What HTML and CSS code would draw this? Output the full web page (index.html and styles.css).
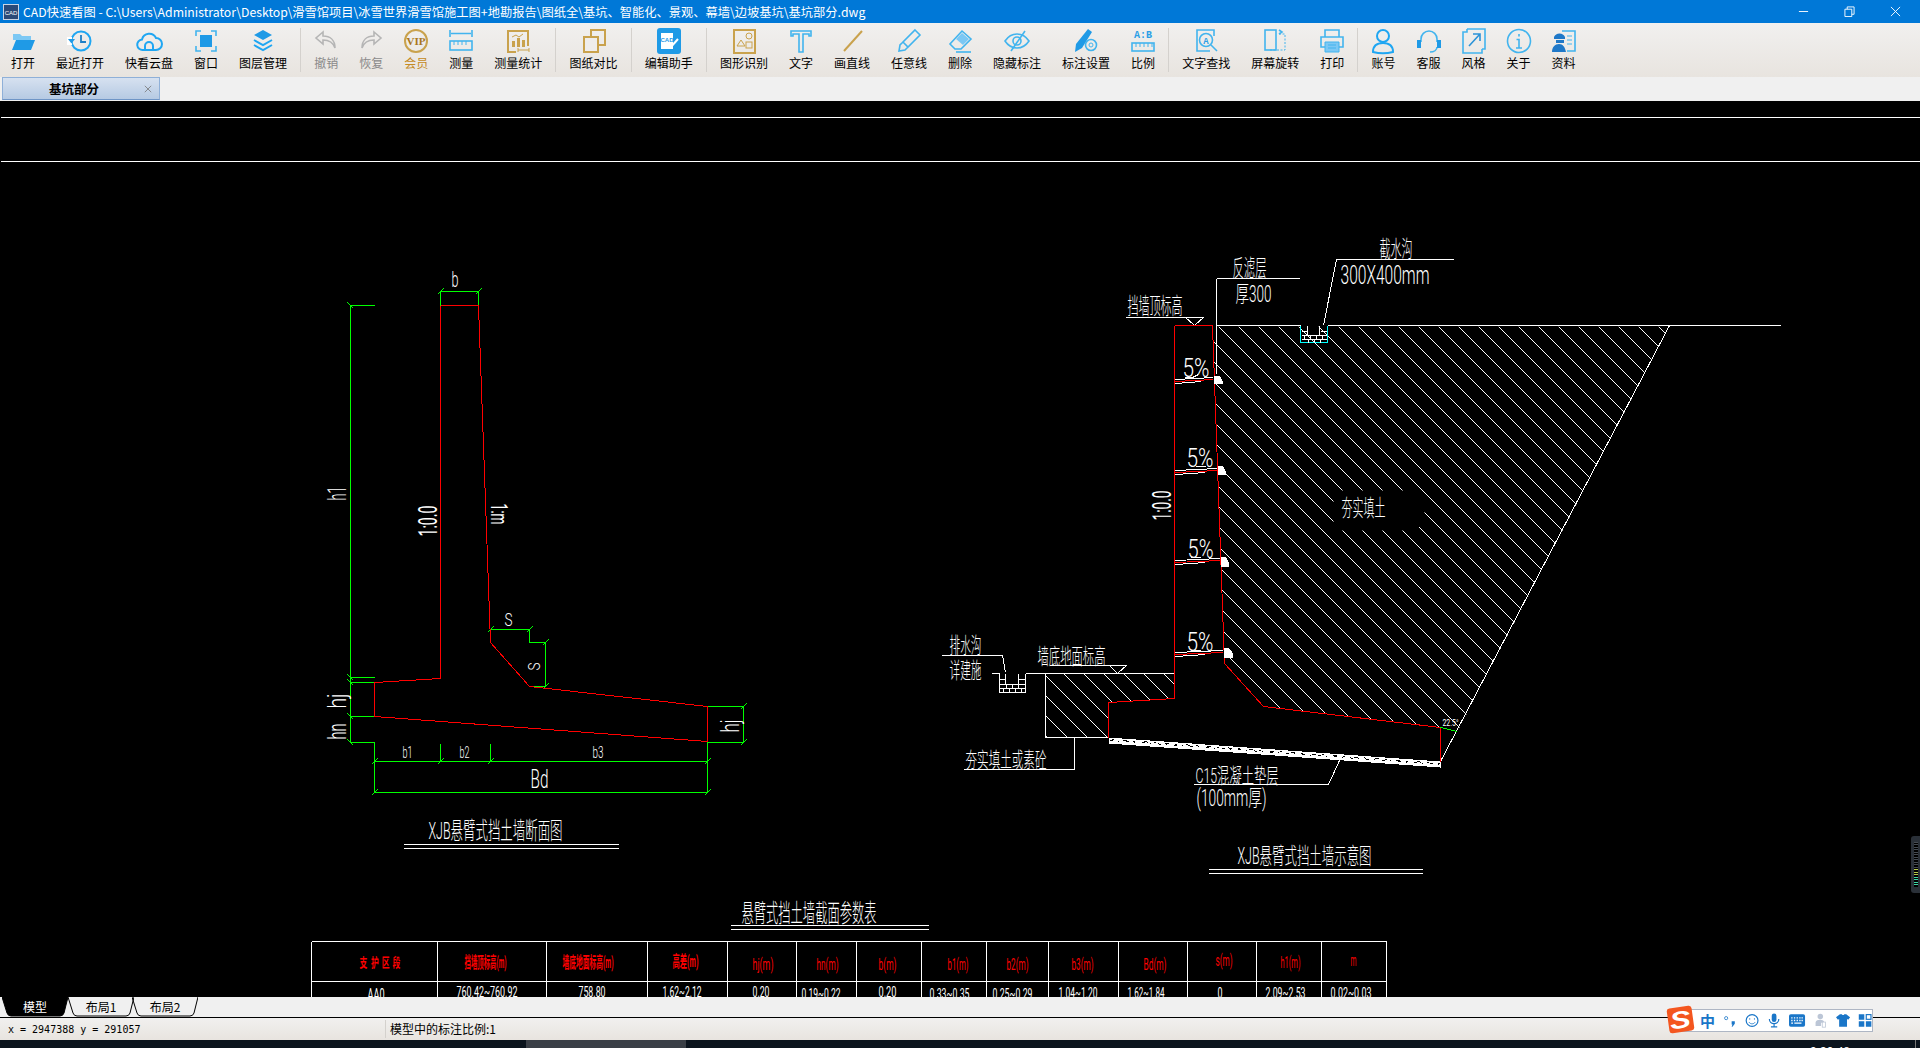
FILE: index.html
```html
<!DOCTYPE html>
<html lang="zh-CN">
<head>
<meta charset="utf-8">
<title>CAD快速看图</title>
<link rel="stylesheet" href="styles.css">
</head>
<body>
<header class="titlebar">
  <svg class="app-icon" viewBox="0 0 16 16"><rect x=".5" y=".5" width="15" height="15" fill="#2b4a78" stroke="#c9d4e4"/><text x="8" y="10.500" class="app-icon-text" text-anchor="middle" font-size="6">CAD</text></svg>
  <span class="title-text">CAD快速看图 - C:\Users\Administrator\Desktop\滑雪馆项目\冰雪世界滑雪馆施工图+地勘报告\图纸全\基坑、智能化、景观、幕墙\边坡基坑\基坑部分.dwg</span>
  <div class="win-controls">
    <span class="win-btn"><svg viewBox="0 0 12 12" class="win-ic"><path d="M1 6h10"/></svg></span>
    <span class="win-btn"><svg viewBox="0 0 12 12" class="win-ic"><path d="M1 3.5h7.500v8H1zM3.500 3.500V1h7.500v8H8.500"/></svg></span>
    <span class="win-btn"><svg viewBox="0 0 12 12" class="win-ic"><path d="M1 1l10 10M11 1L1 11"/></svg></span>
  </div>
</header>

<nav class="toolbar">
  <div class="tool"><svg class="ic" viewBox="0 0 26 26"><path class="f-lt" d="M3 6h7l2 2h9v4H3z"/><path class="f-bl" d="M2 22l4-10h19l-4 10z"/></svg><span>打开</span></div>
  <div class="tool"><svg class="ic" viewBox="0 0 26 26"><circle class="s-bl2" cx="14" cy="13" r="9.500"/><path class="f-wh" d="M0 9h5v8H0z"/><path class="f-bl" d="M1 11h7l-3.500 4.500z"/><path class="s-dk" d="M14 7v7h5"/></svg><span>最近打开</span></div>
  <div class="tool"><svg class="ic" viewBox="0 0 26 26"><path class="s-bl2" d="M7 22a5 5 0 0 1-1-10.500 7.500 7.500 0 0 1 14-1.500 6 6 0 0 1 0 12z"/><path class="s-bl2" d="M9 22v-4a4 4 0 0 1 8 0v4z"/></svg><span>快看云盘</span></div>
  <div class="tool"><svg class="ic" viewBox="0 0 26 26"><path class="s-bl" d="M3 8V3h5M18 3h5v5M23 18v5h-5M8 23H3v-5"/><rect class="f-bl" x="7" y="7" width="12" height="12"/></svg><span>窗口</span></div>
  <div class="tool"><svg class="ic" viewBox="0 0 26 26"><path class="f-bl" d="M13 2l9 5-9 5-9-5z"/><path class="s-bl2" d="M4 12l9 5 9-5M4 17l9 5 9-5"/></svg><span>图层管理</span></div>
  <i class="sep"></i>
  <div class="tool off"><svg class="ic" viewBox="0 0 26 26"><path class="s-gr" d="M10 4L3 10l7 6v-4c6 0 10 2 12 8 0-8-5-12-12-12z"/></svg><span>撤销</span></div>
  <div class="tool off"><svg class="ic" viewBox="0 0 26 26"><path class="s-gr" d="M16 4l7 6-7 6v-4c-6 0-10 2-12 8 0-8 5-12 12-12z"/></svg><span>恢复</span></div>
  <div class="tool vip"><svg class="ic" viewBox="0 0 26 26"><circle class="s-go" cx="13" cy="13" r="11"/><text class="vip-text" x="13" y="17" text-anchor="middle" font-size="11">VIP</text></svg><span>会员</span></div>
  <div class="tool"><svg class="ic" viewBox="0 0 26 26"><path class="s-bl" d="M2 2v7M24 2v7M3 5.500h20"/><rect class="s-bl" x="2" y="13" width="22" height="9"/><path class="s-bl1" d="M6 13v4M10 13v4M14 13v4M18 13v4"/></svg><span>测量</span></div>
  <div class="tool"><svg class="ic" viewBox="0 0 26 26"><path class="s-go" d="M23 18V3H3v21h8"/><path class="f-go" d="M7 13h3v6H7zM12 10h3v9h-3zM17 12h3v7h-3z"/><path class="s-go1" d="M7 9l4-2 3 2 4-3M13 22h11M13 20v4M24 20v4"/></svg><span>测量统计</span></div>
  <i class="sep"></i>
  <div class="tool"><svg class="ic" viewBox="0 0 26 26"><rect class="s-go" x="10" y="2" width="14" height="15"/><rect class="s-go bg-fill" x="3" y="9" width="14" height="15"/></svg><span>图纸对比</span></div>
  <i class="sep"></i>
  <div class="tool"><svg class="ic" viewBox="0 0 26 26"><rect class="f-bl" x="1" y="0" width="24" height="26" rx="3"/><path class="f-wh" d="M5 5h12v16H5z"/><text class="cad-mini" x="11" y="14" text-anchor="middle" font-size="6">CAD</text><path class="s-wh" d="M14 20l8-9"/></svg><span>编辑助手</span></div>
  <i class="sep"></i>
  <div class="tool"><svg class="ic" viewBox="0 0 26 26"><rect class="s-go" x="3" y="2" width="21" height="23"/><path class="s-go1" d="M6 18l4-6 4 6z"/><circle class="s-go1" cx="18" cy="8" r="3"/><rect class="s-go1" x="15" y="14" width="6" height="6"/></svg><span>图形识别</span></div>
  <div class="tool"><svg class="ic" viewBox="0 0 26 26"><path class="s-bl" d="M3 3h20v5h-2V6h-6v18h-4V6H5v2H3z"/></svg><span>文字</span></div>
  <div class="tool"><svg class="ic" viewBox="0 0 26 26"><path class="s-go" d="M5 23L23 3"/></svg><span>画直线</span></div>
  <div class="tool"><svg class="ic" viewBox="0 0 26 26"><path class="s-bl" d="M19 2l5 5-12 12-5-5zM7 14l-3 3-1 6 6-1 3-3"/></svg><span>任意线</span></div>
  <div class="tool"><svg class="ic" viewBox="0 0 26 26"><path class="s-bl" d="M15 3l9 8-10 10H8l-5-5z"/><path class="f-lt" d="M15 5l7 6-6 6-7-6z"/><path class="s-bl" d="M9 24h15"/></svg><span>删除</span></div>
  <div class="tool"><svg class="ic" viewBox="0 0 26 26"><path class="s-bl" d="M1 13c4-6 8-7 12-7s8 1 12 7c-4 6-8 7-12 7s-8-1-12-7z"/><circle class="s-bl" cx="13" cy="13" r="4"/><path class="s-bl" d="M21 3L7 23"/></svg><span>隐藏标注</span></div>
  <div class="tool"><svg class="ic" viewBox="0 0 26 26"><path class="f-bl" d="M15 1l4 3-10 16-7 4 1-8z"/><circle class="s-bl" cx="18" cy="17" r="5.500"/><circle class="s-bl1" cx="18" cy="17" r="2"/></svg><span>标注设置</span></div>
  <div class="tool"><svg class="ic" viewBox="0 0 26 26"><text class="ab-text" x="13" y="10" text-anchor="middle" font-size="10">A:B</text><rect class="s-bl" x="2" y="15" width="22" height="8"/><path class="s-bl1" d="M6 15v4M10 15v4M14 15v4M18 15v4M22 15v4"/></svg><span>比例</span></div>
  <i class="sep"></i>
  <div class="tool"><svg class="ic" viewBox="0 0 26 26"><path class="s-bl" d="M21 8V2H4v21h13"/><circle class="s-bl" cx="13" cy="12" r="6.500"/><text class="ab-text" x="13" y="15.500" text-anchor="middle" font-size="9">A</text><path class="s-bl" d="M18 17l6 6"/></svg><span>文字查找</span></div>
  <div class="tool"><svg class="ic" viewBox="0 0 26 26"><rect class="s-bl" x="3" y="2" width="11" height="20"/><path class="s-bl1 dash" d="M17 6h6v16H8"/><path class="s-bl" d="M17 2l3 2-3 2"/></svg><span>屏幕旋转</span></div>
  <div class="tool"><svg class="ic" viewBox="0 0 26 26"><path class="s-bl" d="M6 9V2h14v7M6 19H2V9h22v10h-4"/><rect class="f-lt" x="6" y="14" width="14" height="10"/><path class="s-bl1" d="M6 14h14v10H6zM9 17h8M9 20h8"/></svg><span>打印</span></div>
  <i class="sep"></i>
  <div class="tool"><svg class="ic" viewBox="0 0 26 26"><circle class="s-bl2" cx="13" cy="8" r="6"/><path class="s-bl2" d="M3 24c0-6 4-9 10-9s10 3 10 9c-6 1.500-14 1.500-20 0z"/></svg><span>账号</span></div>
  <div class="tool"><svg class="ic" viewBox="0 0 26 26"><path class="s-bl" d="M5 14v-3a8 8 0 0 1 16 0v3M21 19c0 3-3 5-7 5"/><path class="f-bl" d="M1 12h4v8H1zM21 12h4v8h-4z"/></svg><span>客服</span></div>
  <div class="tool"><svg class="ic" viewBox="0 0 26 26"><path class="s-bl" d="M6 1h18v20h-3M6 1v3H2v21h19v-4"/><path class="s-dk1" d="M8 18L19 6M12 6h7v7"/></svg><span>风格</span></div>
  <div class="tool"><svg class="ic" viewBox="0 0 26 26"><circle class="s-bl" cx="13" cy="13" r="11.500"/><path class="s-bl" d="M13 6v2.500M10.500 11.500H13V20M10 20h6"/></svg><span>关于</span></div>
  <div class="tool"><svg class="ic" viewBox="0 0 26 26"><path class="s-bl" d="M11 3h13v20H16"/><path class="s-bl1" d="M16 8h5M16 12h5M16 16h5"/><path class="f-dk" d="M3 9a6 6 0 0 1 11 0v2H3zM5 12h8v3H5zM1 24c0-5 3-8 7-8s6 3 7 8z"/></svg><span>资料</span></div>
</nav>

<div class="tabstrip">
  <div class="doc-tab"><span class="doc-name">基坑部分</span><svg class="doc-close" viewBox="0 0 10 10"><path d="M1 1l8 8M9 1L1 9"/></svg></div>
</div>

<main class="canvas">
<svg class="drawing" viewBox="-.5 100.5 1920 896" width="1920" height="896">
  <defs>
    <clipPath id="fill-a"><path clip-rule="evenodd" d="M1212 326H1669L1458 729 1440 727 1263 706 1224 663ZM1333 490H1416L1424 500V520L1416 530H1333Z"/></clipPath>
    <clipPath id="fill-b"><path d="M1045 673H1174V698L1108 702V737H1045Z"/></clipPath>
  </defs>

  <g class="wh">
    <path d="M0 117H1920M0 161H1920"/>
    <path d="M403 844H618M403 848H618M730 925H928M730 929H928M1208 869H1422M1208 873H1422"/>
  </g>

  <!-- left section -->
  <g class="gr">
    <path d="M440 291H478M440 291V305M478 291V305"/>
    <path d="M350 305H374M350 305V742M350 677H374M350 682H374M350 716H374M350 742H374"/>
    <path d="M374 742V792M707 741V792M374 761H707M374 792H707M440 743V761M490 743V761"/>
    <path d="M490 629H529V642H545V686H529M490 629V642"/>
    <path d="M707 706H743V742H707"/>
    <path d="M437 294l6-6M475 294l6-6M347 302l6 6M347 674l6 6M347 679l6 6M347 713l6 6M347 739l6 6M371 764l6-6M437 764l6-6M487 764l6-6M704 764l6-6M371 795l6-6M704 795l6-6M487 632l6-6M526 632l6-6M542 645l6-6M542 689l6-6M740 709l6-6M740 745l6-6"/>
  </g>
  <path class="rd" d="M440 305H478L490 642 529 686 707 706V741L374 716V682L440 678V305"/>

  <text class="cad" x="451" y="286" font-size="22" textLength="7" lengthAdjust="spacingAndGlyphs">b</text>
  <text class="cad" x="345" y="500" font-size="25" transform="rotate(-90 345 500)" textLength="14" lengthAdjust="spacingAndGlyphs">h1</text>
  <text class="cad-small" x="436" y="536" font-size="25" transform="rotate(-90 436 536)" textLength="31" lengthAdjust="spacingAndGlyphs">1:0.0</text>
  <text class="cad-small" x="490" y="503" font-size="23" transform="rotate(90 490 503)" textLength="21" lengthAdjust="spacingAndGlyphs">1:m</text>
  <text class="cad" x="504" y="625" font-size="18" textLength="8" lengthAdjust="spacingAndGlyphs">S</text>
  <text class="cad" x="539" y="670" font-size="17" transform="rotate(-90 539 670)" textLength="8" lengthAdjust="spacingAndGlyphs">S</text>
  <text class="cad" x="345" y="708" font-size="25" transform="rotate(-90 345 708)" textLength="15" lengthAdjust="spacingAndGlyphs">hj</text>
  <text class="cad" x="345" y="739" font-size="25" transform="rotate(-90 345 739)" textLength="16" lengthAdjust="spacingAndGlyphs">hn</text>
  <text class="cad" x="738" y="732" font-size="25" transform="rotate(-90 738 732)" textLength="13" lengthAdjust="spacingAndGlyphs">hj</text>
  <text class="cad" x="402" y="757" font-size="17" textLength="10" lengthAdjust="spacingAndGlyphs">b1</text>
  <text class="cad" x="459" y="757" font-size="17" textLength="10" lengthAdjust="spacingAndGlyphs">b2</text>
  <text class="cad" x="592" y="757" font-size="17" textLength="11" lengthAdjust="spacingAndGlyphs">b3</text>
  <text class="cad" x="530" y="787" font-size="25" textLength="18" lengthAdjust="spacingAndGlyphs">Bd</text>
  <text class="cad" x="428" y="838" font-size="24" textLength="134" lengthAdjust="spacingAndGlyphs">XJB悬臂式挡土墙断面图</text>

  <!-- right section -->
  <g class="hatch">
    <path clip-path="url(#fill-a)" d="M877 325l600 600M897 325l600 600M917 325l600 600M937 325l600 600M957 325l600 600M977 325l600 600M997 325l600 600M1017 325l600 600M1037 325l600 600M1057 325l600 600M1077 325l600 600M1097 325l600 600M1117 325l600 600M1137 325l600 600M1157 325l600 600M1177 325l600 600M1197 325l600 600M1217 325l600 600M1237 325l600 600M1257 325l600 600M1277 325l600 600M1297 325l600 600M1317 325l600 600M1337 325l600 600M1357 325l600 600M1377 325l600 600M1397 325l600 600M1417 325l600 600M1437 325l600 600M1457 325l600 600M1477 325l600 600M1497 325l600 600M1517 325l600 600M1537 325l600 600M1557 325l600 600M1577 325l600 600M1597 325l600 600M1617 325l600 600M1637 325l600 600M1657 325l600 600"/>
    <path clip-path="url(#fill-b)" d="M983 673l100 100M1003 673l100 100M1023 673l100 100M1043 673l100 100M1063 673l100 100M1083 673l100 100M1103 673l100 100M1123 673l100 100M1143 673l100 100M1163 673l100 100"/>
  </g>
  <g class="wh">
    <path d="M1216 325H1300M1327 325H1780M1669 325L1440 761"/>
    <path d="M991 673H999M1025 673H1174M1045 673V737H1108"/>
    <path d="M1216 278V373M1216 278H1299M1336 259H1453M1336 259L1323 325"/>
    <path d="M1125 317H1203M1185 317L1194 325 1203 317"/>
    <path d="M941 655H1002L1005 672M1049 665H1126M1109 665L1117 673 1126 665"/>
    <path d="M1074 737V769H963M1339 760L1328 784H1193"/>
  </g>
  <path class="rd" d="M1174 325H1212L1224 663 1263 706 1440 727V761M1174 325V698L1108 702V737"/>

  <!-- drain pipes -->
  <g class="wh">
    <path d="M1175 379l38-2M1175 383l26-2M1175 470l42-2M1175 474l30-2M1175 560l45-2M1175 564l30-2M1175 652l48-2M1175 656l30-2"/>
    <path d="M1184 377h8l6-3M1195 466h10M1190 557h10M1190 650h10"/>
  </g>
  <path class="rd" d="M1175 381l38-2M1175 472l42-2M1175 562l45-2M1175 654l48-2"/>
  <g class="blob">
    <path d="M1213 375h6l3 5v3h-9zM1217 465h5l3 5v4h-8zM1220 556h5l3 5v5h-8zM1223 647h5l4 5v5h-9z"/>
  </g>

  <!-- top trench -->
  <path class="cy" d="M1300 325V342H1327V325"/>
  <path class="wh" d="M1301 331H1306M1301 335H1326M1301 339H1326M1320 331H1326M1307 325V335M1319 325V335M1304 335V339M1310 335V339M1316 335V339M1322 335V339M1308 339V342M1314 339V342M1320 339V342"/>
  <!-- left trench -->
  <path class="wh" d="M999 673V692H1025V673M1005 673V684H1018V673M999 679H1005M999 684H1005M1018 679H1025M1018 684H1025M999 688H1025M1006 684V688M1012 684V688M1018 684V688M1003 688V692M1009 688V692M1015 688V692M1021 688V692"/>

  <!-- C15 band -->
  <path class="blob" d="M1108 737L1440 761V767L1108 743Z"/>
  <path class="bandtex" d="M1110 740l330 24"/>
  <path class="bandtex2" d="M1112 739l328 24"/>
  <path class="gr" d="M1440 727l17 4"/>

  <text class="cad" x="1127" y="313" font-size="23" textLength="55" lengthAdjust="spacingAndGlyphs">挡墙顶标高</text>
  <text class="cad" x="1232" y="275" font-size="23" textLength="34" lengthAdjust="spacingAndGlyphs">反滤层</text>
  <text class="cad" x="1235" y="301" font-size="23" textLength="36" lengthAdjust="spacingAndGlyphs">厚300</text>
  <text class="cad" x="1379" y="256" font-size="23" textLength="33" lengthAdjust="spacingAndGlyphs">截水沟</text>
  <text class="cad" x="1340" y="283" font-size="25" textLength="89" lengthAdjust="spacingAndGlyphs">300X400mm</text>
  <text class="cad" x="1182" y="376" font-size="25" textLength="27" lengthAdjust="spacingAndGlyphs">5%</text>
  <text class="cad" x="1186" y="466" font-size="25" textLength="27" lengthAdjust="spacingAndGlyphs">5%</text>
  <text class="cad" x="1187" y="557" font-size="25" textLength="26" lengthAdjust="spacingAndGlyphs">5%</text>
  <text class="cad" x="1186" y="650" font-size="25" textLength="27" lengthAdjust="spacingAndGlyphs">5%</text>
  <text class="cad-small" x="1170" y="520" font-size="25" transform="rotate(-90 1170 520)" textLength="30" lengthAdjust="spacingAndGlyphs">1:0.0</text>
  <text class="cad" x="1341" y="515" font-size="23" textLength="44" lengthAdjust="spacingAndGlyphs">夯实填土</text>
  <text class="cad" x="949" y="652" font-size="22" textLength="32" lengthAdjust="spacingAndGlyphs">排水沟</text>
  <text class="cad" x="949" y="677" font-size="22" textLength="32" lengthAdjust="spacingAndGlyphs">详建施</text>
  <text class="cad" x="1037" y="663" font-size="22" textLength="68" lengthAdjust="spacingAndGlyphs">墙底地面标高</text>
  <text class="cad" x="965" y="766" font-size="21" textLength="81" lengthAdjust="spacingAndGlyphs">夯实填土或素砼</text>
  <text class="cad" x="1195" y="782" font-size="21" textLength="83" lengthAdjust="spacingAndGlyphs">C15混凝土垫层</text>
  <text class="cad" x="1196" y="805" font-size="23" textLength="70" lengthAdjust="spacingAndGlyphs">(100mm厚)</text>
  <text class="cad-small" x="1442" y="725" font-size="9" textLength="16" lengthAdjust="spacingAndGlyphs">22.5°</text>
  <text class="cad" x="1237" y="863" font-size="23" textLength="134" lengthAdjust="spacingAndGlyphs">XJB悬臂式挡土墙示意图</text>

  <!-- table -->
  <text class="cad" x="741" y="921" font-size="25" textLength="135" lengthAdjust="spacingAndGlyphs">悬臂式挡土墙截面参数表</text>
  <path class="wh" d="M311 941H1386M311 981H1386M311 941V997M437 941V997M546 941V997M647 941V997M727 941V997M796 941V997M856 941V997M921 941V997M986 941V997M1048 941V997M1118 941V997M1187 941V997M1256 941V997M1321 941V997M1386 941V997"/>
  <g class="cad-red">
    <text class="cjk-dense" transform="translate(359 966) scale(.6 1)" x="0 19 37 55" font-size="13">支护区段</text>
    <text class="cjk-dense" x="464" y="967" font-size="16" textLength="42" lengthAdjust="spacingAndGlyphs">挡墙顶标高(m)</text>
    <text class="cjk-dense" x="562" y="967" font-size="16" textLength="51" lengthAdjust="spacingAndGlyphs">墙底地面标高(m)</text>
    <text class="cjk-dense" x="672" y="966" font-size="16" textLength="26" lengthAdjust="spacingAndGlyphs">高差(m)</text>
    <text x="752" y="969" font-size="16" textLength="21" lengthAdjust="spacingAndGlyphs">hj(m)</text>
    <text x="816" y="969" font-size="16" textLength="22" lengthAdjust="spacingAndGlyphs">hn(m)</text>
    <text x="878" y="969" font-size="16" textLength="18" lengthAdjust="spacingAndGlyphs">b(m)</text>
    <text x="947" y="969" font-size="16" textLength="21" lengthAdjust="spacingAndGlyphs">b1(m)</text>
    <text x="1006" y="969" font-size="16" textLength="22" lengthAdjust="spacingAndGlyphs">b2(m)</text>
    <text x="1071" y="969" font-size="16" textLength="22" lengthAdjust="spacingAndGlyphs">b3(m)</text>
    <text x="1143" y="969" font-size="16" textLength="23" lengthAdjust="spacingAndGlyphs">Bd(m)</text>
    <text x="1215" y="965" font-size="16" textLength="17" lengthAdjust="spacingAndGlyphs">s(m)</text>
    <text x="1280" y="967" font-size="16" textLength="20" lengthAdjust="spacingAndGlyphs">h1(m)</text>
    <text x="1350" y="965" font-size="16" textLength="6" lengthAdjust="spacingAndGlyphs">m</text>
  </g>
  <g class="cad-small">
    <text x="367" y="999" font-size="16" textLength="17" lengthAdjust="spacingAndGlyphs">AA0</text>
    <text x="456" y="996" font-size="15" textLength="61" lengthAdjust="spacingAndGlyphs">760.42~760.92</text>
    <text x="578" y="996" font-size="15" textLength="27" lengthAdjust="spacingAndGlyphs">758.80</text>
    <text x="662" y="996" font-size="15" textLength="39" lengthAdjust="spacingAndGlyphs">1.62~2.12</text>
    <text x="752" y="996" font-size="15" textLength="17" lengthAdjust="spacingAndGlyphs">0.20</text>
    <text x="801" y="998" font-size="15" textLength="39" lengthAdjust="spacingAndGlyphs">0.19~0.22</text>
    <text x="878" y="996" font-size="15" textLength="18" lengthAdjust="spacingAndGlyphs">0.20</text>
    <text x="929" y="998" font-size="15" textLength="40" lengthAdjust="spacingAndGlyphs">0.33~0.35</text>
    <text x="992" y="998" font-size="15" textLength="40" lengthAdjust="spacingAndGlyphs">0.25~0.29</text>
    <text x="1058" y="997" font-size="15" textLength="39" lengthAdjust="spacingAndGlyphs">1.04~1.20</text>
    <text x="1127" y="997" font-size="15" textLength="37" lengthAdjust="spacingAndGlyphs">1.62~1.84</text>
    <text x="1217" y="997" font-size="15" textLength="5" lengthAdjust="spacingAndGlyphs">0</text>
    <text x="1265" y="997" font-size="15" textLength="40" lengthAdjust="spacingAndGlyphs">2.09~2.53</text>
    <text x="1330" y="997" font-size="15" textLength="41" lengthAdjust="spacingAndGlyphs">0.02~0.03</text>
  </g>
</svg>
</main>

<div class="sheets">
  <div class="sheet active"><svg class="sheet-shape" viewBox="0 0 66 20"><path d="M0 0L5 16Q6 19 9 19H58Q61 19 62 16L66 0Z"/></svg><span>模型</span></div>
  <div class="sheet"><svg class="sheet-shape" viewBox="0 0 66 20"><path d="M0 0L5 16Q6 19 9 19H58Q61 19 62 16L66 0"/></svg><span>布局1</span></div>
  <div class="sheet overlap"><svg class="sheet-shape" viewBox="0 0 66 20"><path d="M0 0L5 16Q6 19 9 19H58Q61 19 62 16L66 0"/></svg><span>布局2</span></div>
</div>
<div class="status">
  <span class="coords">x = 2947388 y = 291057</span>
  <span class="scale">模型中的标注比例:1</span>
</div>
<footer class="taskbar">
  <i class="task-active"></i>
  <span class="clock">9:30:48</span>
  <i class="task-edge"></i>
</footer>

<div class="volume"><i class="vol-bars"></i></div>

<div class="ime">
  <span class="ime-logo"><b>S</b></span>
  <span class="ime-zh">中</span>
  <svg class="ime-ic" viewBox="0 0 18 18"><circle class="ime-s1" cx="4" cy="6" r="2"/><path class="ime-f" d="M11 10h4v3l-3 4h-1l1-3h-1z"/></svg>
  <svg class="ime-ic" viewBox="0 0 18 18"><circle class="ime-s" cx="9" cy="9" r="7.500"/><path class="ime-s1" d="M6 6v2M12 6v2M5 11c2 3 6 3 8 0"/></svg>
  <svg class="ime-ic" viewBox="0 0 18 18"><rect class="ime-f" x="6" y="0" width="6" height="11" rx="3"/><path class="ime-s" d="M3 7c0 8 12 8 12 0M9 13v4M5 17h8"/></svg>
  <svg class="ime-ic wide" viewBox="0 0 18 14"><rect class="ime-f" x="0" y="0" width="18" height="14" rx="2"/><path class="ime-key" d="M2.500 4h1.500M5.500 4H7M8.500 4H10M11.500 4H13M14 4h1.500M2.500 7h1.500M5.500 7H7M8.500 7H10M11.500 7H13M14 7h1.500M2.500 10h2M6 10h8"/></svg>
  <svg class="ime-ic" viewBox="0 0 18 18"><circle class="ime-pale" cx="8" cy="4" r="3.500"/><path class="ime-pale" d="M2 16v-4c0-3 3-4 6-4s5 1 5 4H9v4z"/><rect class="ime-pale-s" x="10.500" y="11" width="4" height="6.500"/></svg>
  <svg class="ime-ic" viewBox="0 0 18 18"><path class="ime-f" d="M5 1h2.500c.5 1.500 2.500 1.500 3 0H13l5 4-2.500 3-1.500-1v10H4V7L2.500 8 0 5z"/></svg>
  <svg class="ime-ic" viewBox="0 0 18 18"><path class="ime-f" d="M1 1h7v7H1zM1 10h7v7H1zM10 10h7v7h-7z"/><rect class="ime-s" x="10.500" y="1.500" width="6" height="6"/></svg>
</div>
</body>
</html>
```
FILE: styles.css
```css
* { box-sizing: border-box; }
html, body { margin: 0; padding: 0; }
body {
  width: 1920px; height: 1048px; overflow: hidden; position: relative;
  display: flex; flex-direction: column; background: #000;
  font-family: "Noto Sans CJK SC", "Liberation Sans", sans-serif; font-size: 12px; color: #000;
}

/* title bar */
.titlebar { flex: 0 0 23px; background: #0078d7; color: #fff; display: flex; align-items: center; padding-left: 3px; }
.app-icon { width: 16px; height: 16px; margin-right: 4px; }
.app-icon-text { fill: #fff; font-family: "Liberation Sans", sans-serif; }
.title-text { font-size: 12.25px; line-height: 16px; white-space: nowrap; }
.win-controls { margin-left: auto; display: flex; padding-right: 2px; }
.win-btn { width: 46px; height: 23px; display: flex; align-items: center; justify-content: center; }
.win-ic { width: 11px; height: 11px; fill: none; stroke: #fff; stroke-width: 1; }

/* toolbar */
.toolbar { flex: 0 0 54px; display: flex; align-items: flex-start; background: linear-gradient(#f1f0ef, #e8e4df); padding-left: .5px; }
.tool { display: flex; flex-direction: column; align-items: center; padding: 5px 10.5px 0; }
.tool span { line-height: 16px; margin-top: 1px; white-space: nowrap; }
.tool.off span { color: #8a8a8a; }
.tool.vip span { color: #c48a22; }
.ic { width: 26px; height: 26px; display: block; overflow: visible; margin: 0 -1px; }
.sep { flex: 0 0 1px; width: 1px; height: 44px; margin: 5px 2.6px 0; background: #d4d1cd; }

.f-bl { fill: #1f9ae6; }
.f-lt { fill: #7cc8f4; }
.f-wh { fill: #fff; }
.f-go { fill: #c9a24d; }
.f-dk { fill: #1f78c8; }
.s-bl, .s-bl1, .s-bl2, .s-dk, .s-dk1, .s-gr, .s-go, .s-go1, .s-wh { fill: none; }
.s-bl { stroke: #42b4ee; stroke-width: 1.6; }
.s-bl1 { stroke: #42b4ee; stroke-width: 1; }
.s-bl2 { stroke: #1fa6f2; stroke-width: 2; }
.s-dk { stroke: #1f7fc6; stroke-width: 1.8; }
.s-dk1 { stroke: #2b93d8; stroke-width: 1.6; }
.s-gr { stroke: #b5b5b5; stroke-width: 1.6; }
.s-go { stroke: #c9a24d; stroke-width: 2; }
.s-go1 { stroke: #c9a24d; stroke-width: 1; }
.s-wh { stroke: #fff; stroke-width: 2; }
.bg-fill { fill: #efedeb; }
.dash { stroke-dasharray: 2 1.5; }
.vip-text { fill: #a8761c; font-family: "Liberation Serif", serif; font-weight: 700; }
.cad-mini { fill: #1f9ae6; font-family: "Liberation Sans", sans-serif; font-weight: 700; }
.ab-text { fill: #2b9fe6; font-family: "Liberation Mono", monospace; font-weight: 700; }

/* document tabs */
.tabstrip { flex: 0 0 24px; background: #f0f0f0; padding-left: 2px; }
.doc-tab { width: 158px; height: 23px; display: flex; align-items: center; position: relative; justify-content: center; padding-right: 14px;
  background: linear-gradient(#d6e1f0, #b6cae3); border: 1px solid #8fb0d8; border-bottom-color: #6f95c6; }
.doc-name { font-weight: 700; font-size: 12.5px; }
.doc-close { position: absolute; right: 7px; top: 7px; width: 8px; height: 8px; fill: none; stroke: #777; stroke-width: 1; }

/* cad canvas */
.canvas { flex: 0 0 896px; background: #000; overflow: hidden; }
.drawing { display: block; shape-rendering: crispEdges; }
.wh, .gr, .rd, .cy, .hatch { fill: none; stroke-width: 1; }
.wh, .hatch { stroke: #fff; }
.gr { stroke: #00ff00; }
.rd { stroke: #ff0000; }
.cy { stroke: #00ffff; }
.blob { fill: #fff; }
.bandtex { fill: none; stroke: #000; stroke-width: 1; stroke-dasharray: 3 5 1 7; }
.bandtex2 { fill: none; stroke: #000; stroke-width: 1; stroke-dasharray: 2 9 4 6; }
.cad { fill: #fff; font-family: Roboto, "Noto Sans CJK SC", sans-serif; font-weight: 300; }
.cad-small { fill: #fff; font-family: Roboto, "Noto Sans CJK SC", sans-serif; font-weight: 400; }
.cad-red { fill: #ff0000; font-family: Roboto, "Noto Sans CJK SC", sans-serif; font-weight: 400; }
.cjk-dense { font-weight: 700; }

/* layout tabs */
.sheets { flex: 0 0 20px; background: #f0f0f0; display: flex; padding-left: 2px; }
.sheet { width: 66px; height: 20px; position: relative; display: flex; align-items: center; justify-content: center; font-size: 12px; line-height: 18px; }
.sheet span { position: relative; }
.sheet.overlap { margin-left: -2px; }
.sheet-shape { position: absolute; inset: 0; width: 66px; height: 20px; fill: none; stroke: #000; stroke-width: 1; }
.sheet.active { color: #fff; }
.sheet.active .sheet-shape { fill: #000; }

/* status */
.status { flex: 0 0 23px; border-top: 1px solid #000; background: linear-gradient(#f1f0ef, #e8e4df); display: flex; align-items: center; padding-left: 8px; }
.coords { font-family: "DejaVu Sans Mono", monospace; font-size: 10px; width: 377px; }
.scale { border-left: 1px solid #d4d1cd; padding-left: 4px; line-height: 18px; font-size: 12px; }

/* taskbar */
.taskbar { flex: 0 0 8px; background: #0b141d; position: relative; overflow: hidden; display: flex; padding-left: 526px; }
.task-active { width: 160px; background: #3a3f46; }
.clock { position: absolute; left: 1810px; top: 5px; color: #fff; font-family: "Liberation Sans", sans-serif; font-size: 12px; line-height: 14px; }
.task-edge { position: absolute; left: 1915px; top: 0; width: 1px; height: 8px; background: #777; }

/* volume overlay */
.volume { position: absolute; left: 1911px; top: 836px; width: 9px; height: 57px; border-radius: 3px 0 0 3px; background: #2a3038; padding: 6px 1px 6px 3px; }
.vol-bars { display: block; width: 4px; height: 45px;
  background: repeating-linear-gradient(transparent 0 1px, #000 1px 2.5px),
    linear-gradient(#454b52 0 60%, #b5c94a 60% 78%, #3bd6a6 78%); }

/* input method bar */
.ime { position: absolute; left: 1680px; top: 1009px; width: 193px; height: 23px; background: #fff; border: 1px solid #aeb6c4; display: flex; align-items: center; padding-left: 19px; gap: 8px; }
.ime-logo { position: absolute; left: -13px; top: -3px; width: 25px; height: 25px; background: #f4561f; border-radius: 3px; transform: rotate(-8deg); display: flex; align-items: center; justify-content: center; color: #fff; font-family: "Liberation Sans", sans-serif; font-size: 24px; line-height: 25px; font-style: italic; }
.ime-logo b { transform: scaleX(1.3); }
.ime-zh { font-size: 15px; font-weight: 700; line-height: 20px; color: #1a76c8; width: 15px; }
.ime-ic { width: 15px; height: 17px; display: block; }
.ime-ic.wide { width: 17px; height: 13px; }
.ime-f { fill: #1a76c8; }
.ime-s { fill: none; stroke: #1a76c8; stroke-width: 1.500; }
.ime-s1 { fill: none; stroke: #1a76c8; stroke-width: 1; }
.ime-key { fill: none; stroke: #fff; stroke-width: 1.500; }
.ime-pale { fill: #bcc6d6; }
.ime-pale-s { fill: #fff; stroke: #bcc6d6; stroke-width: 1; }
```
